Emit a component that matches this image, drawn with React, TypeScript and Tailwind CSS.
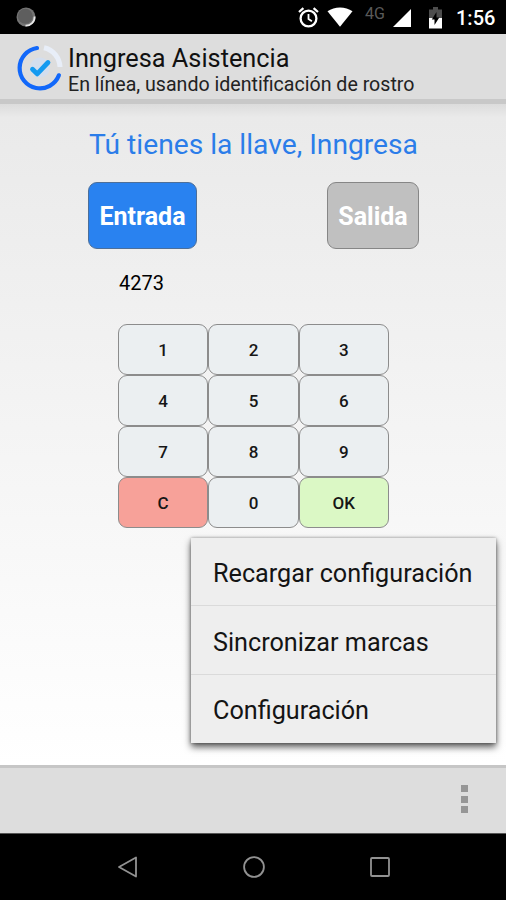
import { useState } from "react";

interface KeyProps {
  label: string;
  onPress: (label: string) => void;
}

const keys = ["1", "2", "3", "4", "5", "6", "7", "8", "9", "C", "0", "OK"];
const menuItems = ["Recargar configuración", "Sincronizar marcas", "Configuración"];

const StatusBar = () => (
  <div className="flex h-[34px] shrink-0 items-start bg-black pl-4 pr-[11px] text-white">
    <svg className="mt-[7px]" width="20" height="20" viewBox="0 0 20 20">
      <circle cx="10" cy="10" r="9.5" fill="#747474" />
      <circle cx="9.3" cy="9.3" r="7.5" fill="#5e5e5e" />
      <path d="M18.6 9.500A8.700 8.700 0 0 1 9.500 18.600" fill="none" stroke="#e8e8e8" strokeWidth="1.800" />
    </svg>
    <svg className="ml-auto mt-[7px]" width="21" height="21" viewBox="0 0 21 21" fill="none" stroke="#fff">
      <circle cx="10.500" cy="11.500" r="7.900" strokeWidth="2.300" />
      <path d="M10.500 7v5l3.400 2.200" strokeWidth="1.800" />
      <path d="M1 5l4.400-3.800M20 5l-4.400-3.800" strokeWidth="2.300" />
    </svg>
    <svg className="ml-[8px] mt-[7px]" width="26" height="20" viewBox="0 0 26 20">
      <path d="M0.500 4.200C7.500-.9 18.500-.9 25.500 4.200L13 19.700Z" fill="#fff" />
    </svg>
    <span className="ml-[12px] mt-[5px] w-[24px] text-[16px] leading-[18px] text-[#5a5a5a]">4G</span>
    <svg className="ml-[4px] mt-[9px]" width="18" height="18" viewBox="0 0 18 18">
      <path d="M18 0v18H0Z" fill="#fff" />
    </svg>
    <svg className="ml-[18px] mt-[7px]" width="13" height="22" viewBox="0 0 13 22">
      <path d="M4 0h5v2.500h4V11H0V2.500h4Z" fill="#4d4d4d" />
      <path d="M0 11h13v10.500H0Z" fill="#fff" />
      <path d="M7.500 5v5.500h2.800L5.500 18v-5.500H2.800Z" fill="#000" />
    </svg>
    <span className="ml-[14px] mt-[6px] w-[39px] whitespace-nowrap text-[20px] font-medium leading-6">1:56</span>
  </div>
);

const Logo = () => (
  <svg className="ml-[17px] mt-[10px] shrink-0" width="46" height="48" viewBox="0 0 46 48" fill="none">
    <circle cx="23" cy="23.500" r="10" fill="#d3deee" />
    <path d="M27 3.800A20.300 20.300 0 0 1 43 23" stroke="#e8eef8" strokeWidth="5" />
    <path
      d="M20 4A20.300 20.300 0 1 0 41.900 31.300"
      stroke="#1268fa"
      strokeWidth="4.200"
      strokeLinecap="round"
    />
    <path d="M15.500 25.200l4.700 4.700L31 18.500" stroke="#149af0" strokeWidth="4.800" strokeLinecap="round" strokeLinejoin="round" />
  </svg>
);

const Key: React.FC<KeyProps> = ({ label, onPress }) => {
  const color = label === "C" ? "bg-[#f7a199]" : label === "OK" ? "bg-[#dbf8c5]" : "bg-[#ebeff1]";
  return (
    <button
      onClick={() => onPress(label)}
      className={`${color} h-[51px] rounded-[9px] border border-[#8c8c8c] pt-[2px] text-[17px] font-medium text-[#161616]`}
    >
      {label}
    </button>
  );
};

const App = () => {
  const [code, setCode] = useState("4273");

  const handlePress = (label: string) => {
    if (label === "C") {
      setCode("");
    } else if (label !== "OK") {
      setCode(code + label);
    }
  };

  return (
    <div className="relative flex h-[900px] w-[506px] flex-col overflow-hidden bg-black font-[Roboto,sans-serif] text-black">
      <StatusBar />

      <header className="flex h-[70px] shrink-0 border-b-[5px] border-[#c8c8c8] bg-[#dddddd]">
        <Logo />
        <div className="ml-[5px] mt-[10px] whitespace-nowrap text-[#111]">
          <h1 className="text-[25.300px] leading-[30px]">Inngresa Asistencia</h1>
          <p className="text-[19.600px] leading-[22px] text-[#222]">En línea, usando identificación de rostro</p>
        </div>
      </header>

      <main className="flex flex-1 flex-col bg-linear-to-b from-[#dcdcdc] via-[#eaeaea] via-[2%] to-white">
        <h2 className="mt-[23px] pl-px text-center text-[28.200px] leading-9 text-[#2b7de9]">
          Tú tienes la llave, Inngresa
        </h2>
        <div className="mt-[19px] flex justify-between pl-[88px] pr-[87px] text-[25px] font-bold text-white">
          <button className="h-[67px] w-[109px] rounded-[9px] border border-[#4d6f99] bg-[#2982f0] pt-[3px]">Entrada</button>
          <button className="h-[67px] w-[92px] rounded-[9px] border border-[#868686] bg-[#c0c0c0] pt-[3px]">Salida</button>
        </div>
        <p className="ml-[119px] mt-[22px] h-6 text-[20px] leading-6">{code}</p>
        <div className="ml-[118px] mt-[29px] grid w-[271px] grid-cols-3">
          {keys.map((key) => (
            <Key key={key} label={key} onPress={handlePress} />
          ))}
        </div>
      </main>

      <footer className="flex h-[68px] shrink-0 justify-end border-t-[3px] border-[#c6c6c6] bg-[#dddddd] pr-[38px]">
        <button className="flex flex-col gap-[3.500px] pt-[17px]">
          <span className="size-[7px] bg-[#969696]" />
          <span className="size-[7px] bg-[#969696]" />
          <span className="size-[7px] bg-[#969696]" />
        </button>
      </footer>

      <nav className="flex h-[67px] shrink-0 justify-between border-t border-[#555] bg-black pl-[116px] pr-[114px] pt-[21px]">
        <svg width="24" height="24" viewBox="0 0 24 24" fill="none" stroke="#929292" strokeWidth="1.800">
          <path d="M20 2.500v19L3 12Z" strokeLinejoin="round" />
        </svg>
        <svg width="24" height="24" viewBox="0 0 24 24" fill="none" stroke="#929292" strokeWidth="1.800">
          <circle cx="12" cy="12" r="9.900" />
        </svg>
        <svg width="24" height="24" viewBox="0 0 24 24" fill="none" stroke="#929292" strokeWidth="1.800">
          <rect x="3" y="3" width="18" height="18" rx="1" />
        </svg>
      </nav>

      {/* overflow menu */}
      <ul className="absolute left-[191px] top-[538px] h-[205px] w-[305px] divide-y divide-[#dadada] bg-[#eeeeee] text-[25.200px] text-[#141414] shadow-[0_4px_7px_rgba(0,0,0,0.65),0_0_3px_rgba(0,0,0,0.35)]">
        {menuItems.map((item) => (
          <li key={item} className="flex h-[68.300px] items-center whitespace-nowrap pl-[22px] pt-[5px]">
            {item}
          </li>
        ))}
      </ul>
    </div>
  );
};

export default App;
